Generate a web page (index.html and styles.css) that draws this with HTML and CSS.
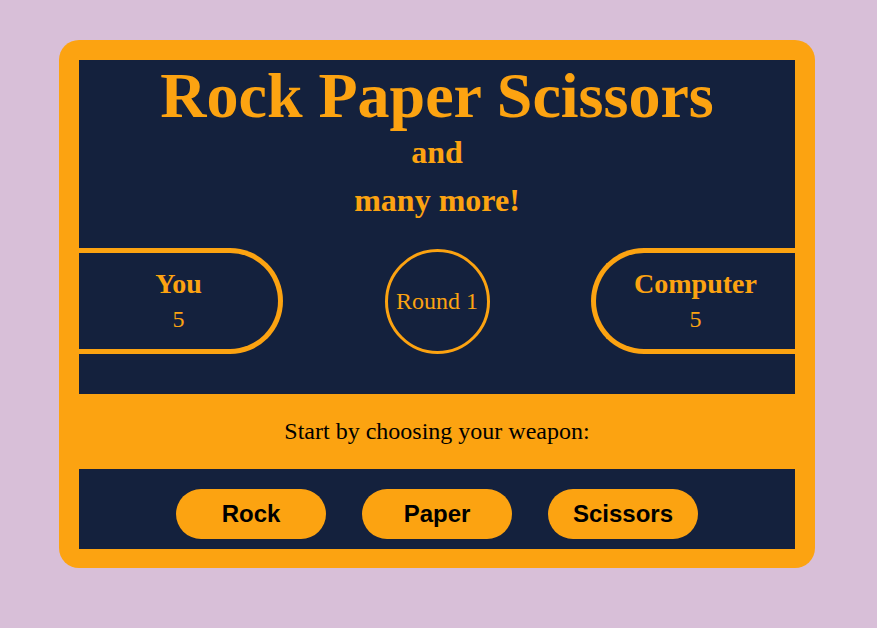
FILE: index.html
```html
<!DOCTYPE html>
<html lang="en">
<head>
<meta charset="utf-8">
<title>Rock Paper Scissors</title>
<link rel="stylesheet" href="styles.css">
</head>
<body>
<div class="game">
  <section class="board">
    <h1 class="title">Rock Paper Scissors</h1>
    <p class="subtitle">and</p>
    <p class="subtitle">many more!</p>
    <div class="scores">
      <div class="score score-left">
        <div class="name">You</div>
        <div class="points">5</div>
      </div>
      <div class="round">Round 1</div>
      <div class="score score-right">
        <div class="name">Computer</div>
        <div class="points">5</div>
      </div>
    </div>
  </section>
  <p class="message">Start by choosing your weapon:</p>
  <section class="choices">
    <button class="choice">Rock</button>
    <button class="choice">Paper</button>
    <button class="choice">Scissors</button>
  </section>
</div>
</body>
</html>
```
FILE: styles.css
```css
html, body {
  margin: 0;
  padding: 0;
}
body {
  background: #d8bfd8;
  font-family: "Liberation Serif", "Times New Roman", serif;
  width: 877px;
  height: 628px;
  overflow: hidden;
}
.game {
  box-sizing: border-box;
  width: 756px;
  margin: 40px 0 0 59px;
  padding: 20px 20px 19px;
  background: #fca311;
  border-radius: 20px;
}
.board {
  background: #14213d;
  color: #fca311;
  height: 334px;
  padding-top: 4px;
  box-sizing: border-box;
  text-align: center;
}
.title {
  margin: 0;
  font-size: 64px;
  line-height: 64px;
  font-weight: bold;
}
.subtitle {
  margin: 0;
  font-size: 32px;
  line-height: 48px;
  font-weight: bold;
}
.scores {
  margin-top: 24px;
  display: flex;
  justify-content: space-between;
  align-items: center;
}
.score {
  box-sizing: border-box;
  width: 204px;
  height: 106px;
  border: 5px solid #fca311;
  padding-top: 15px;
}
.score-left {
  border-left: none;
  border-radius: 0 53px 53px 0;
}
.score-right {
  border-right: none;
  border-radius: 53px 0 0 53px;
}
.name {
  font-size: 28px;
  line-height: 32px;
  font-weight: bold;
}
.points {
  font-size: 24px;
  line-height: 38px;
}
.round {
  box-sizing: border-box;
  width: 105px;
  height: 105px;
  border: 3px solid #fca311;
  border-radius: 50%;
  display: flex;
  align-items: center;
  justify-content: center;
  font-size: 24px;
  line-height: 24px;
}
.message {
  margin: 0;
  height: 75px;
  font-size: 24px;
  line-height: 75px;
  text-align: center;
  color: #000;
}
.choices {
  background: #14213d;
  height: 80px;
  box-sizing: border-box;
  padding: 20px 0 10px;
  display: flex;
  justify-content: center;
  gap: 36px;
}
.choice {
  width: 150px;
  height: 50px;
  border: none;
  border-radius: 25px;
  background: #fca311;
  color: #000;
  font-family: "Liberation Sans", Arial, sans-serif;
  font-weight: bold;
  font-size: 24px;
  line-height: 50px;
  padding: 0;
}
```
